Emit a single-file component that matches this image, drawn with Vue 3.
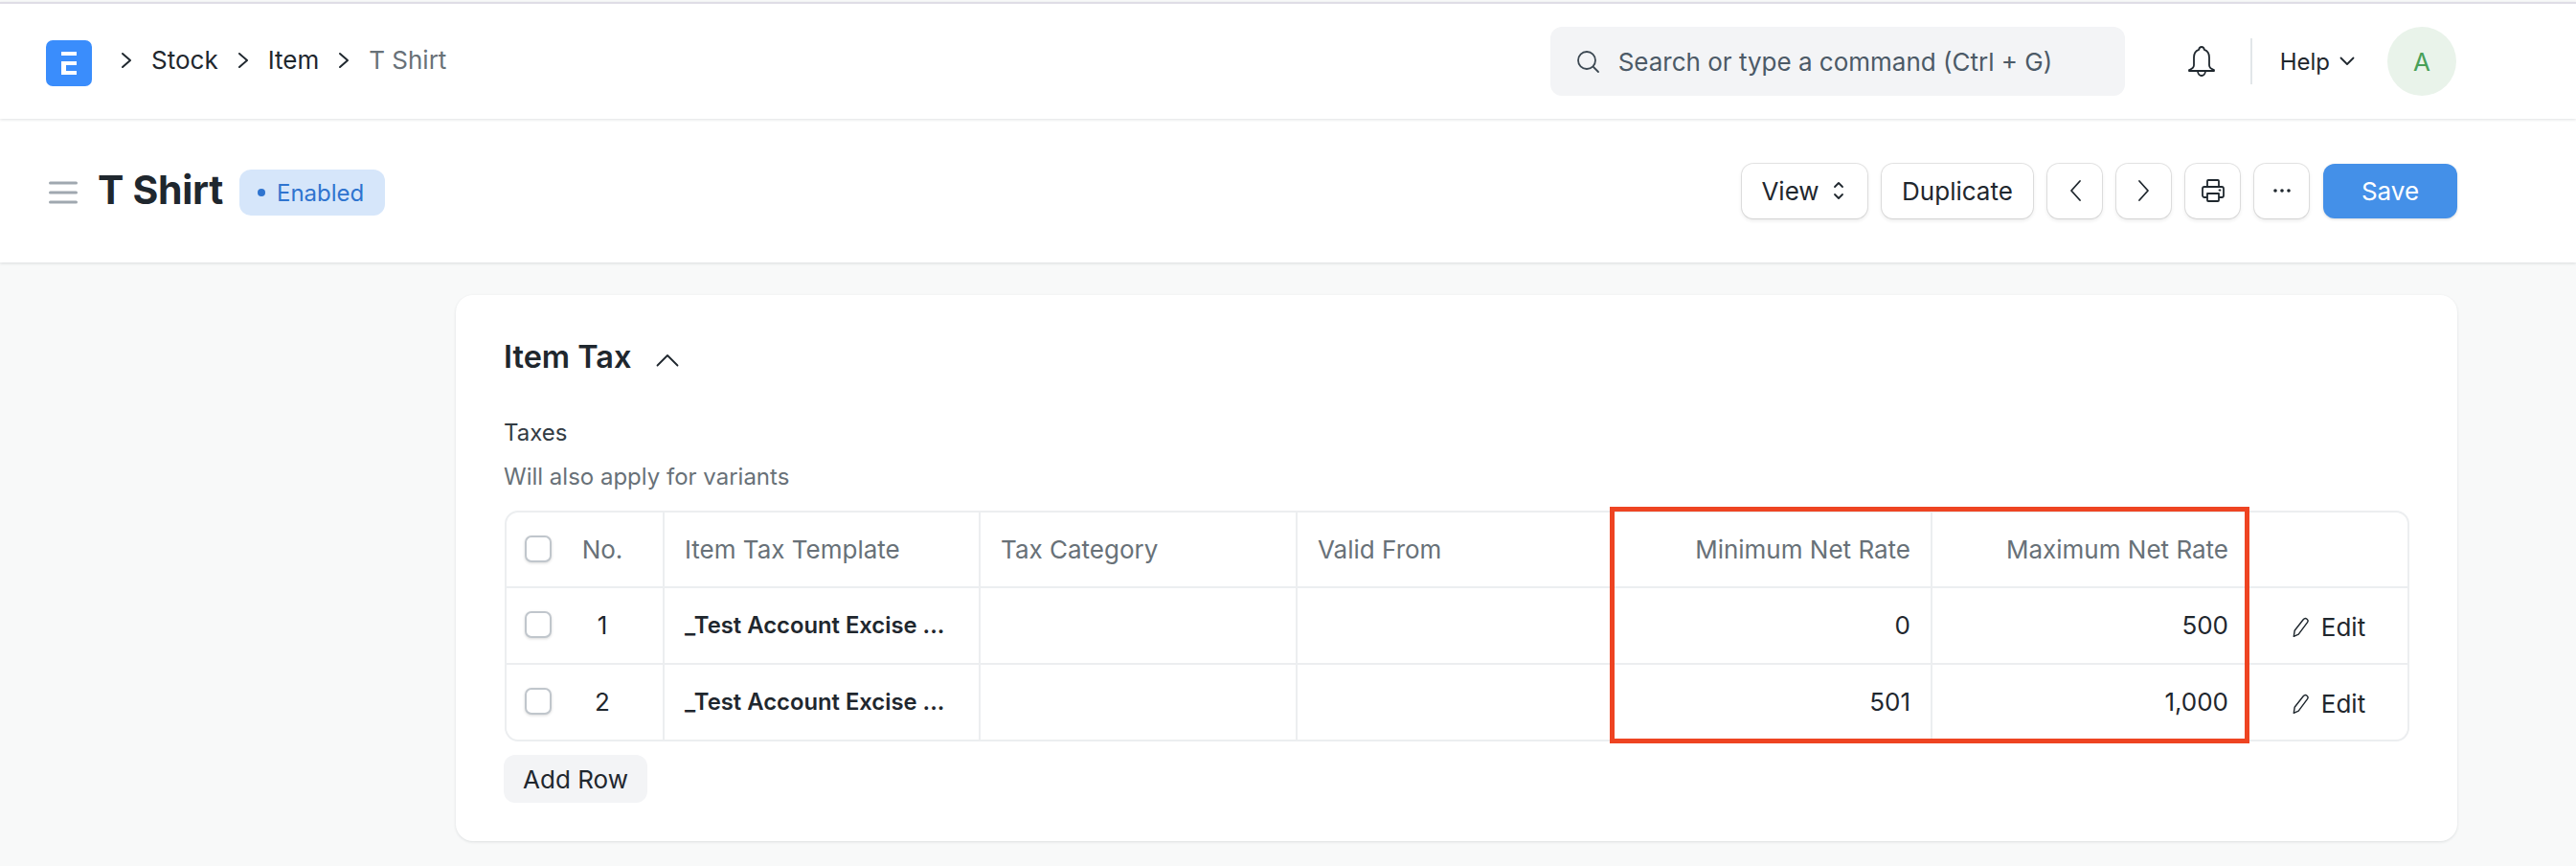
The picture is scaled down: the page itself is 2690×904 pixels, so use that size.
<script setup>
const cols = ['Item Tax Template', 'Tax Category', 'Valid From']
const rows = [
  { no: 1, tpl: '_Test Account Excise ...', min: '0', max: '500' },
  { no: 2, tpl: '_Test Account Excise ...', min: '501', max: '1,000' }
]
</script>

<template>
  <div class="page">
    <header class="nav">
      <div class="logo">
        <svg width="18" height="26" viewBox="0 0 18 26"><path fill="#fff" d="M1 1h16v4H1zM1 11h16v4H6v6h11v4H1z"/></svg>
      </div>
      <nav class="crumbs">
        <svg class="crumb-sep" width="12" height="18" viewBox="0 0 12 18"><path d="M2 2l8 7-8 7" /></svg>
        <span>Stock</span>
        <svg class="crumb-sep" width="12" height="18" viewBox="0 0 12 18"><path d="M2 2l8 7-8 7" /></svg>
        <span>Item</span>
        <svg class="crumb-sep" width="12" height="18" viewBox="0 0 12 18"><path d="M2 2l8 7-8 7" /></svg>
        <span class="current">T Shirt</span>
      </nav>
      <div class="nav-right">
        <div class="search">
          <svg width="26" height="26" viewBox="0 0 26 26" class="ico"><circle cx="12" cy="12" r="9"/><path d="M19 19l5 5"/></svg>
          <span>Search or type a command (Ctrl + G)</span>
        </div>
        <svg class="bell ico" width="30" height="34" viewBox="0 0 30 34"><path d="M15 2c-1.700 0-2.600 1.200-2.800 2.800C8.500 6 7 9.500 7 13v8c0 2-2 4-5 5v1h26v-1c-3-1-5-3-5-5v-8c0-3.500-1.500-7-5.200-8.200C17.600 3.200 16.700 2 15 2zM11 27c0 3 2 5 4 5s4-2 4-5"/></svg>
        <div class="divider"></div>
        <div class="help">Help
          <svg class="ico" width="16" height="10" viewBox="0 0 16 10"><path d="M1.500 1.500L8 8l6.500-6.500"/></svg>
        </div>
        <div class="avatar">A</div>
      </div>
    </header>

    <section class="head">
      <svg class="burger" width="30" height="24" viewBox="0 0 30 24"><path d="M1.500 2h27M1.500 12h27M1.500 22h27"/></svg>
      <h1>T Shirt</h1>
      <div class="badge"><i></i>Enabled</div>
      <div class="actions">
        <button class="btn view">View
          <svg class="ico" width="12" height="20" viewBox="0 0 12 20"><path d="M2 6l4-4 4 4M2 14l4 4 4-4"/></svg>
        </button>
        <button class="btn dup">Duplicate</button>
        <button class="btn sq"><svg class="ico" width="14" height="24" viewBox="0 0 14 24"><path d="M12 2L3 12l9 10"/></svg></button>
        <button class="btn sq"><svg class="ico" width="14" height="24" viewBox="0 0 14 24"><path d="M2 2l9 10-9 10"/></svg></button>
        <button class="btn sq"><svg class="ico" width="26" height="26" viewBox="0 0 26 26"><path d="M7 9V3a1 1 0 011-1h10a1 1 0 011 1v6M7 20H4a2 2 0 01-2-2v-7a2 2 0 012-2h18a2 2 0 012 2v7a2 2 0 01-2 2h-3M7 16h12v7a1 1 0 01-1 1H8a1 1 0 01-1-1zM19.500 12.500h1"/></svg></button>
        <button class="btn sq"><svg width="20" height="6" viewBox="0 0 20 6"><circle cx="3" cy="3" r="1.800" fill="#1f272e"/><circle cx="10" cy="3" r="1.800" fill="#1f272e"/><circle cx="17" cy="3" r="1.800" fill="#1f272e"/></svg></button>
        <button class="btn save">Save</button>
      </div>
    </section>

    <main class="main">
      <section class="card">
        <div class="sec-title">
          <h2>Item Tax</h2>
          <svg class="ico" width="24" height="14" viewBox="0 0 24 14"><path d="M1.500 12.500L12 2l10.500 10.500"/></svg>
        </div>
        <div class="label">Taxes</div>
        <div class="desc">Will also apply for variants</div>
        <div class="table-wrap">
          <div class="grid">
            <div class="row hdr">
              <div class="c c0"><span class="check"></span><span class="no">No.</span></div>
              <div v-for="c in cols" :key="c" class="c">{{ c }}</div>
              <div class="c r">Minimum Net Rate</div>
              <div class="c r last">Maximum Net Rate</div>
              <div class="c cl"></div>
            </div>
            <div v-for="r in rows" :key="r.no" class="row">
              <div class="c c0"><span class="check"></span><span class="no">{{ r.no }}</span></div>
              <div class="c b">{{ r.tpl }}</div>
              <div class="c"></div>
              <div class="c"></div>
              <div class="c r v">{{ r.min }}</div>
              <div class="c r v last">{{ r.max }}</div>
              <div class="c cl edit">
                <svg class="ico" width="20" height="22" viewBox="0 0 18 20"><path d="M2 18.500l.8-5.500L11 2.500c1-1.200 2.500-1.300 3.500-.5s1.200 2.200.3 3.400L6.500 16.500z"/></svg>
                <span>Edit</span>
              </div>
            </div>
          </div>
          <div class="mark"></div>
        </div>
        <button class="add">Add Row</button>
      </section>
    </main>
  </div>
</template>

<style scoped>
.page { width: 2690px; height: 904px; overflow: hidden; background: #f8f9f9; font-family: Inter, "Liberation Sans", sans-serif; color: #1f272e; display: flex; flex-direction: column; }
.ico { fill: none; stroke: #1f272e; stroke-width: 1.8; stroke-linecap: round; stroke-linejoin: round; flex: none; }

.nav { margin-top: 2px; border-top: 2px solid #dfdde6; background: #fff; box-shadow: 0 1px 3px rgba(25, 39, 52, .14); display: flex; align-items: center; padding: 0 125px 0 48px; box-sizing: content-box; height: 120px; position: relative; z-index: 2; }
.logo { width: 48px; height: 48px; margin-top: 4px; background: #3a8dfc; border-radius: 7px; display: flex; align-items: center; justify-content: center; }
.crumbs { display: flex; align-items: center; margin-left: 30px; margin-top: -2px; font-size: 26px; line-height: 30px; }
.crumb-sep { fill: none; stroke: #1f272e; stroke-width: 2; stroke-linecap: round; stroke-linejoin: round; margin-right: 20px; }
.crumbs span { margin-right: 20px; }
.crumbs .current { color: #687178; }
.nav-right { margin-left: auto; display: flex; align-items: center; }
.search { width: 600px; height: 72px; box-sizing: border-box; background: #f3f4f6; border-radius: 12px; display: flex; align-items: center; padding-left: 26px; gap: 19px; font-size: 26px; color: #4c5a67; }
.search .ico { stroke: #3c4852; }
.bell { margin-left: 65px; }
.divider { width: 2px; height: 48px; background: #e2e6e9; margin-left: 36px; }
.help { display: flex; align-items: center; gap: 10px; font-size: 24px; margin-left: 29px; }
.avatar { width: 72px; height: 72px; border-radius: 50%; margin-left: 34px; background: #e9f3ea; color: #48a058; font-size: 26px; display: flex; align-items: center; justify-content: center; }

.head { height: 150px; background: #fff; box-shadow: 0 1px 3px rgba(25, 39, 52, .14); display: flex; align-items: center; padding: 0 124px 0 51px; position: relative; z-index: 1; }
.burger { fill: none; stroke: #a0a8b0; stroke-width: 3; stroke-linecap: round; margin-top: 4px; }
h1 { margin: -3px 0 0 21px; font-size: 41px; font-weight: 700; line-height: 48px; letter-spacing: -.3px; }
.badge { margin: 4px 0 0 17px; width: 152px; height: 48px; box-sizing: border-box; background: #d6e6fa; color: #2f74cf; border-radius: 12px; display: flex; align-items: center; padding-left: 19px; gap: 12px; font-size: 24px; }
.badge i { width: 8px; height: 8px; background: #2f74cf; border-radius: 50%; }
.actions { margin-left: auto; display: flex; gap: 15px; }
.btn { height: 57px; box-sizing: border-box; border: 0; background: #fff; border-radius: 12px; box-shadow: 0 0 0 1px rgba(0,0,0,.1), 0 2px 4px rgba(0,0,0,.1); font: inherit; font-size: 26px; color: #1f272e; display: flex; align-items: center; justify-content: center; padding: 0; }
.view { width: 131px; gap: 14px; padding-right: 4px; }
.dup { width: 158px; }
.sq { width: 57px; }
.save { width: 140px; background: #4490e8; color: #fff; box-shadow: 0 1px 3px rgba(0,0,0,.15); }

.main { flex: 1; padding: 34px 124px 0 476px; }
.card { height: 570px; box-sizing: border-box; background: #fff; border-radius: 18px; box-shadow: 0 1px 3px rgba(25, 39, 52, .12); padding: 0 50px 0 50px; }
.sec-title { display: flex; align-items: center; gap: 25px; padding-top: 50px; height: 30px; box-sizing: content-box; }
h2 { margin: 0; font-size: 32.500px; font-weight: 600; line-height: 36px; }
.sec-title .ico { margin-top: 6px; }
.label { margin-top: 50px; font-size: 24px; line-height: 28px; color: #333c44; }
.desc { margin-top: 18px; font-size: 24px; line-height: 28px; color: #687178; }
.table-wrap { position: relative; margin-top: 21px; margin-left: 1px; }
.grid { border: 2px solid #eceef0; border-radius: 14px; overflow: hidden; }
.row { display: grid; grid-template-columns: 163px 330px 331px 330px 333px 331px 1fr; height: 80px; border-top: 2px solid #eceef0; box-sizing: border-box; }
.row.hdr { border-top: 0; height: 77px; color: #687178; }
.c { border-left: 2px solid #eceef0; display: flex; align-items: center; padding: 0 21px 2px; font-size: 26px; min-width: 0; }
.hdr .c { padding-bottom: 1px; }
.c.last { padding-right: 20px; }
.c0 { border-left: 0; padding: 0 0 2px 19px; }
.check { width: 28px; height: 28px; box-sizing: border-box; border: 2px solid #c0c6cc; border-radius: 7px; box-shadow: 0 1px 3px rgba(0,0,0,.15); background: #fff; flex: none; }
.no { width: 64px; margin-left: 21px; text-align: center; font-size: 26px; margin-right: -12px; }
.r { justify-content: flex-end; }
.b { font-weight: 600; font-size: 23.800px; white-space: nowrap; }
.v { color: #1f272e; }
.cl { border-left: 0; }
.edit { gap: 11px; justify-content: center; padding: 3px 0 0 2px; font-size: 26px; }
.edit .ico { stroke-width: 1.300; }
.mark { position: absolute; left: 1154px; top: -4px; width: 668px; height: 247px; box-sizing: border-box; border: 5px solid #ee4422; pointer-events: none; }
.add { margin-top: 14px; display: block; width: 150px; height: 50px; border: 0; padding: 0; border-radius: 12px; background: #f3f4f6; font: inherit; font-size: 26px; color: #1f272e; }
</style>
